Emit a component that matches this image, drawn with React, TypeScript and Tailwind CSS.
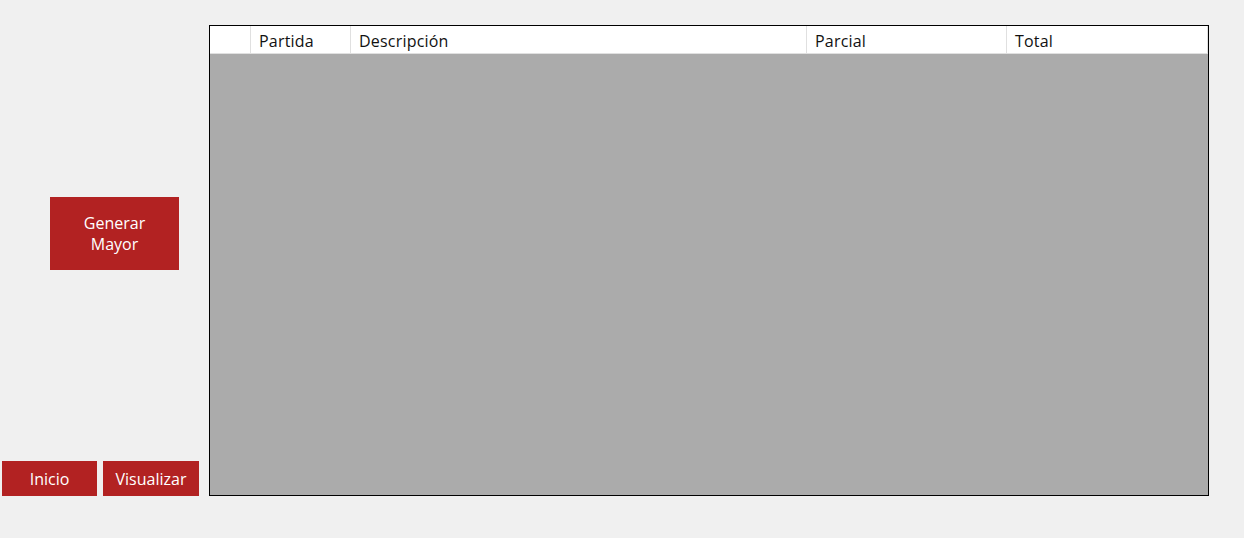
import React from "react";

const font = { fontFamily: '"Open Sans", "DejaVu Sans", sans-serif' };

export default function App() {
  const cols = [
    { label: "", w: "w-[41px]" },
    { label: "Partida", w: "w-[100px]" },
    { label: "Descripción", w: "w-[456px]" },
    { label: "Parcial", w: "w-[200px]" },
    { label: "Total", w: "w-[201px]" },
  ];
  return (
    <div
      className="w-[1244px] h-[538px] bg-[#f0f0f0] flex pt-[25px] text-[16px]"
      style={font}
    >
      <div className="w-[209px] h-[471px] flex flex-col">
        <button className="ml-[50px] mt-[172px] w-[129px] h-[73px] bg-[#b22222] text-white leading-[21px] flex flex-col items-center justify-center">
          <span>Generar</span>
          <span>Mayor</span>
        </button>
        <div className="mt-auto ml-[2px] flex gap-[6px]">
          <button className="w-[95px] h-[35px] bg-[#b22222] text-white">Inicio</button>
          <button className="w-[96px] h-[35px] bg-[#b22222] text-white">Visualizar</button>
        </div>
      </div>
      <div className="w-[1000px] h-[471px] border border-black bg-[#ababab] flex flex-col">
        <div className="flex h-[28px] bg-white border-b border-[#e0e0e0]">
          {cols.map((c, i) => (
            <div
              key={i}
              className={`${c.w} h-full border-r border-[#e0e0e0] pl-[8px] flex items-center text-[#111] leading-none pt-[3px] tracking-[0.2px]`}
            >
              {c.label}
            </div>
          ))}
        </div>
      </div>
    </div>
  );
}
